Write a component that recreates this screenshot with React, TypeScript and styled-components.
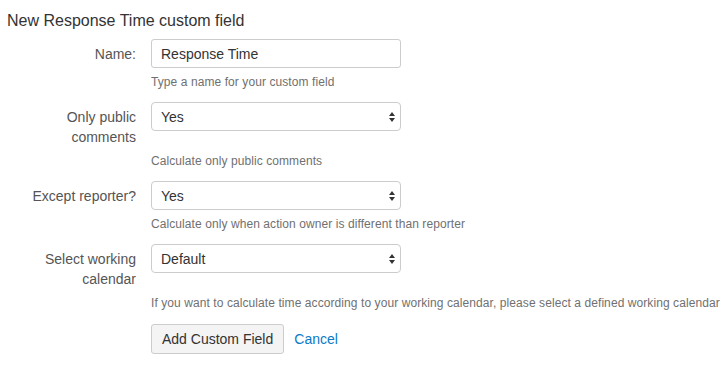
import React from "react";
import styled, { createGlobalStyle } from "styled-components";

const Global = createGlobalStyle`
  html, body { margin: 0; padding: 0; background: #fff; }
  body { font-family: "Liberation Sans", Arial, sans-serif; color: #333; }
`;

const Page = styled.div`
  padding: 11px 0 0 7px;
`;

const Title = styled.h2`
  margin: 0 0 8px 0;
  font-size: 16px;
  font-weight: normal;
  line-height: 20px;
  color: #333;
`;

const Form = styled.form`
  display: flex;
  flex-direction: column;
  gap: 12px;
`;

const FieldGroup = styled.div`
  display: grid;
  grid-template-columns: 129px 250px;
  column-gap: 15px;
  row-gap: 6px;
  align-items: start;
`;

const Label = styled.label`
  grid-column: 1;
  grid-row: 1;
  text-align: right;
  font-size: 14px;
  line-height: 20px;
  padding-top: 5px;
  color: #555;
`;

const Control = styled.div`
  grid-column: 2;
  grid-row: 1;
  position: relative;
`;

const fieldBase = `
  box-sizing: border-box;
  width: 250px;
  height: 29px;
  border: 1px solid #ccc;
  border-radius: 3px;
  background: #fff;
  font-family: "Liberation Sans", Arial, sans-serif;
  font-size: 14px;
  color: #333;
  padding: 0 9px;
  margin: 0;
  outline: none;
`;

const TextInput = styled.input`
  ${fieldBase}
`;

const Select = styled.select`
  ${fieldBase}
  appearance: none;
  -webkit-appearance: none;
  border-radius: 4px;
  padding-right: 24px;
`;

const Arrows = styled.svg`
  position: absolute;
  right: 4px;
  top: 9px;
  pointer-events: none;
`;

const Help = styled.div`
  grid-column: 2;
  grid-row: 2;
  font-size: 12px;
  line-height: 16px;
  letter-spacing: 0.08px;
  color: #707070;
  white-space: nowrap;
`;

const Buttons = styled.div`
  display: flex;
  align-items: center;
  gap: 10px;
  padding-left: 144px;
  margin-top: 1px;
`;

const Button = styled.button`
  box-sizing: border-box;
  height: 30px;
  padding: 0 10px;
  border: 1px solid #ccc;
  border-radius: 3px;
  background: #f4f4f4;
  font-family: "Liberation Sans", Arial, sans-serif;
  font-size: 14px;
  color: #333;
`;

const LinkButton = styled.a`
  font-size: 14px;
  color: #0a7ac8;
  text-decoration: none;
`;

const SelectArrows = () => (
  <Arrows width="10" height="12" viewBox="0 0 10 12">
    <path d="M5 1 L8 5 L2 5 Z" fill="#333" />
    <path d="M5 11 L8 7 L2 7 Z" fill="#333" />
  </Arrows>
);

type SelectFieldProps = { label: React.ReactNode; value: string; help: string };

const SelectField = ({ label, value, help }: SelectFieldProps) => (
  <FieldGroup>
    <Label>{label}</Label>
    <Control>
      <Select defaultValue={value}>
        <option>{value}</option>
      </Select>
      <SelectArrows />
    </Control>
    <Help>{help}</Help>
  </FieldGroup>
);

export default function App() {
  return (
    <>
      <Global />
      <Page>
        <Title>New Response Time custom field</Title>
        <Form onSubmit={(e) => e.preventDefault()}>
          <FieldGroup>
            <Label>Name:</Label>
            <Control>
              <TextInput defaultValue="Response Time" />
            </Control>
            <Help>Type a name for your custom field</Help>
          </FieldGroup>
          <SelectField
            label={<>Only public<br />comments</>}
            value="Yes"
            help="Calculate only public comments"
          />
          <SelectField
            label="Except reporter?"
            value="Yes"
            help="Calculate only when action owner is different than reporter"
          />
          <SelectField
            label={<>Select working<br />calendar</>}
            value="Default"
            help="If you want to calculate time according to your working calendar, please select a defined working calendar"
          />
          <Buttons>
            <Button type="button">Add Custom Field</Button>
            <LinkButton href="#">Cancel</LinkButton>
          </Buttons>
        </Form>
      </Page>
    </>
  );
}
